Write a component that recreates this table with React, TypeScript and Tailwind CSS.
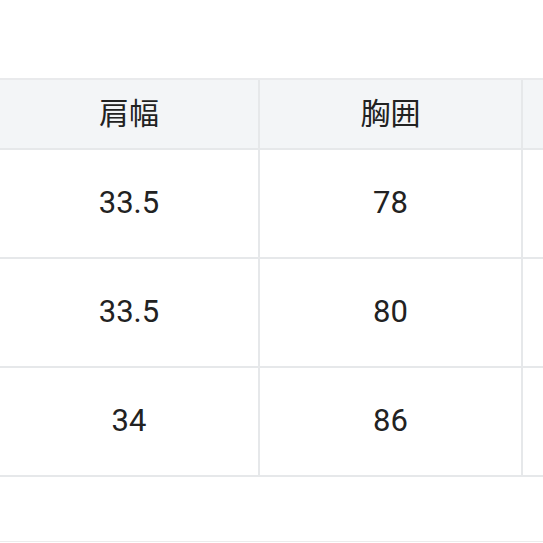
import React from "react";

const rows = [
  ["33.5", "78"],
  ["33.5", "80"],
  ["34", "86"],
];

export default function App() {
  return (
    <div
      className="w-[543px] h-[543px] overflow-hidden bg-white text-[#222]"
      style={{ fontFamily: 'Roboto, "Noto Sans CJK JP", sans-serif' }}
    >
      <div className="pt-[78px]">
        <div className="border-t-2 border-[#e9eaec] w-[600px]">
          <div className="grid grid-cols-[260px_263px_77px] h-[70px] bg-[#f3f5f7]">
            <div className="flex items-center justify-center border-r-2 border-b-2 border-[#e6e8ea] text-[30px] pb-[2px]">
              肩幅
            </div>
            <div className="flex items-center justify-center border-r-2 border-b-2 border-[#e6e8ea] text-[30px] pb-[2px]">
              胸囲
            </div>
            <div className="border-b-2 border-[#e6e8ea]" />
          </div>
          {rows.map((r, i) => (
            <div key={i} className="grid grid-cols-[260px_263px_77px] h-[109px] bg-white">
              <div className="flex items-center justify-center border-r-2 border-b-2 border-[#e6e8ea] text-[31px]">
                {r[0]}
              </div>
              <div className="flex items-center justify-center border-r-2 border-b-2 border-[#e6e8ea] text-[31px]">
                {r[1]}
              </div>
              <div className="border-b-2 border-[#e6e8ea]" />
            </div>
          ))}
        </div>
        <div className="mt-[64px] border-t border-[#ececec]" />
      </div>
    </div>
  );
}
